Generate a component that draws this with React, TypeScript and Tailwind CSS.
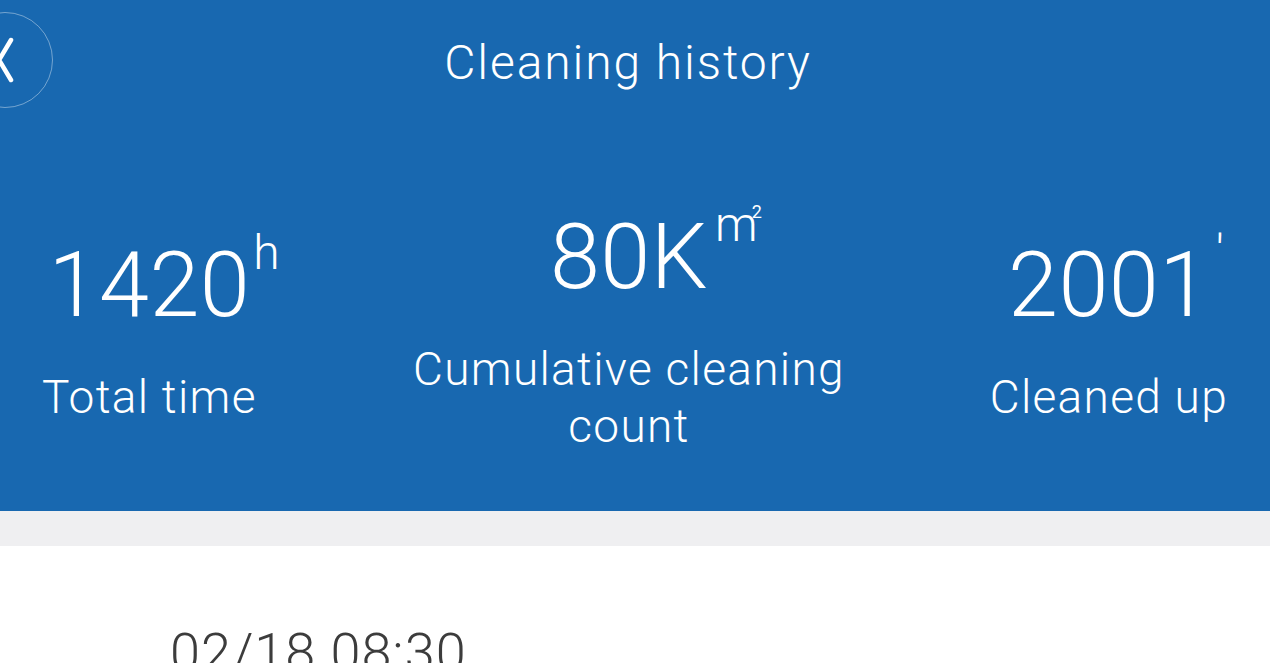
import React from "react";

function Stat({
  value,
  unit,
  unitClass,
  label,
  className,
}: {
  value: string;
  unit: React.ReactNode;
  unitClass: string;
  label: React.ReactNode;
  className?: string;
}) {
  return (
    <div className={"flex flex-col items-center " + (className ?? "")}>
      <div className="relative">
        <span className="text-[90px] leading-none font-light tracking-[0.5px]">{value}</span>
        <span className={"absolute top-[-12px] text-[48px] leading-none font-light " + unitClass}>{unit}</span>
      </div>
      <div className="mt-[38px] text-[46px] leading-[57px] font-light tracking-[1.3px] text-center">{label}</div>
    </div>
  );
}

export default function App() {
  return (
    <div className="w-[1270px] h-[663px] overflow-hidden bg-white font-['Roboto','Liberation_Sans',sans-serif]">
      <div className="h-[511px] bg-[#1868b0] text-white flex flex-col">
        <div className="h-[120px] shrink-0 grid grid-cols-[1fr_auto_1fr] items-center pr-[14px]">
          <div className="flex items-center">
            <div className="-ml-[43px] w-[96px] h-[96px] rounded-full border-[1.5px] border-white/40 flex items-center justify-center">
              <svg width="20" height="48" viewBox="0 0 20 48" className="ml-[4px] overflow-visible">
                <path d="M14 4 L2 24 L14 44" fill="none" stroke="white" strokeWidth="4.5" strokeLinecap="round" strokeLinejoin="round" />
              </svg>
            </div>
          </div>
          <div className="text-[48px] leading-none font-light tracking-[1.9px] pt-[5px]">Cleaning history</div>
          <div />
        </div>
        <div className="flex-1 grid grid-cols-[1fr_auto_1fr] items-center pl-[30px] pr-[42px] pt-[36px]">
          <Stat className="justify-self-start ml-[12px]" value="1420" unit="h" unitClass="left-[calc(100%+3px)]" label="Total time" />
          <Stat
            value="80K"
            unitClass="left-[calc(100%+7px)]"
            unit={
              <span className="whitespace-nowrap">
                m<span className="relative -top-[23px] -ml-[6px] text-[18px] font-normal">2</span>
              </span>
            }
            label={
              <>
                Cumulative cleaning
                <br />
                count
              </>
            }
          />
          <Stat className="justify-self-end" value="2001" unit="'" unitClass="left-[calc(100%+6px)]" label="Cleaned up" />
        </div>
      </div>
      <div className="h-[35px] bg-[#efeff1]" />
      <div className="pt-[80px] pl-[170px] text-[54px] leading-none font-light tracking-[1px] text-[#3c3c3c]">02/18 08:30</div>
    </div>
  );
}
